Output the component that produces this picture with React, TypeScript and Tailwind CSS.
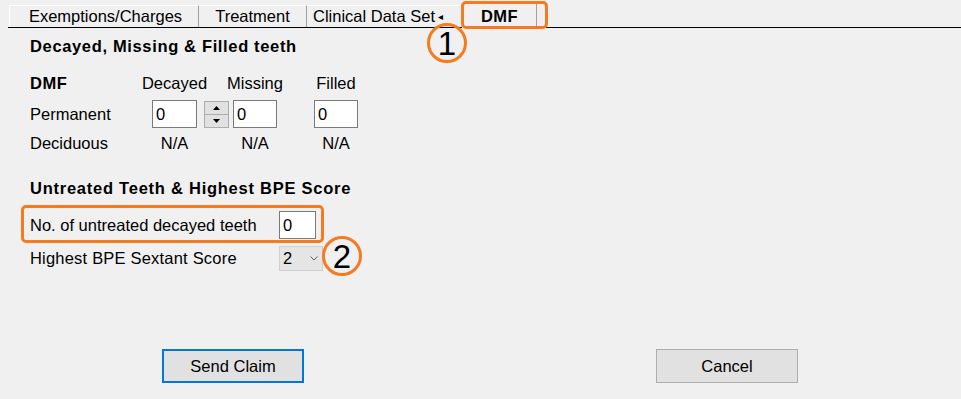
import React from "react";

const Annotation = ({ n, className }: { n: string; className: string }) => (
  <div
    className={`absolute w-[40px] h-[40px] rounded-full border-[3px] border-[#f47b20] flex items-center justify-center text-[33px] leading-none text-black ${className}`}
  >
    {n}
  </div>
);

function NumBox({ value, className = "" }: { value: string; className?: string }) {
  return (
    <div className={`h-[28px] bg-white border border-[#7a7a7a] flex items-center pl-[3px] ${className}`}>
      {value}
    </div>
  );
}

function Spinner() {
  return (
    <div className="w-[25px] h-[27px] flex flex-col border border-[#adadad] bg-[#e1e1e1]">
      <div className="flex-1 flex items-center justify-center border-b border-[#adadad]">
        <svg width="7" height="4" viewBox="0 0 7 4">
          <path d="M3.5 0 L7 4 L0 4 Z" fill="#000" />
        </svg>
      </div>
      <div className="flex-1 flex items-center justify-center">
        <svg width="7" height="4" viewBox="0 0 7 4">
          <path d="M0 0 L7 0 L3.5 4 Z" fill="#000" />
        </svg>
      </div>
    </div>
  );
}

export default function App() {
  return (
    <div className="relative w-[961px] h-[399px] bg-[#f0f0f0] overflow-hidden font-['Liberation_Sans',Arial,sans-serif] text-[16.5px] text-black">
      {/* tab strip */}
      <div className="ml-[8px] h-[28px] flex items-end border-b border-black">
        <div className="ml-px w-[190px] h-[22px] flex items-center justify-center pl-[3px] border-t border-l border-white border-r border-r-[#a0a0a0] bg-[#f0f0f0]">
          Exemptions/Charges
        </div>
        <div className="w-[108px] h-[22px] flex items-center justify-center border-t border-white border-r border-r-[#a0a0a0]">
          Treatment
        </div>
        <div className="w-[154px] h-[22px] flex items-center pl-[6px] border-t border-white whitespace-nowrap">
          Clinical Data Set
          <span className="ml-[3px] text-[10px]">◂</span>
        </div>
        <div className="ml-px w-[75px] h-[25px] flex items-center justify-center font-bold tracking-[0.4px] bg-[#f0f0f0] border-t border-l border-white border-r border-r-[#a0a0a0] mb-[-1px]">
          DMF
        </div>
      </div>

      <div className="pl-[30px]">
        <div className="mt-[8px] leading-[20px] font-bold tracking-[0.65px]">Decayed, Missing &amp; Filled teeth</div>

        {/* DMF grid */}
        <div className="mt-[17px] flex leading-[20px]">
          <div className="w-[122px] font-bold tracking-[0.5px]">DMF</div>
          <div className="w-[45px] flex justify-center whitespace-nowrap">Decayed</div>
          <div className="w-[36px]" />
          <div className="w-[44px] flex justify-center whitespace-nowrap">Missing</div>
          <div className="w-[37px]" />
          <div className="w-[44px] flex justify-center whitespace-nowrap">Filled</div>
        </div>
        <div className="mt-[7px] flex items-center">
          <div className="w-[122px]">Permanent</div>
          <NumBox value="0" className="w-[45px]" />
          <div className="w-[36px] flex pl-[7px]">
            <Spinner />
          </div>
          <NumBox value="0" className="w-[44px]" />
          <div className="w-[37px]" />
          <NumBox value="0" className="w-[44px]" />
        </div>
        <div className="mt-[5px] flex leading-[20px]">
          <div className="w-[122px]">Deciduous</div>
          <div className="w-[45px] flex justify-center">N/A</div>
          <div className="w-[36px]" />
          <div className="w-[44px] flex justify-center">N/A</div>
          <div className="w-[37px]" />
          <div className="w-[44px] flex justify-center">N/A</div>
        </div>

        <div className="mt-[25px] leading-[20px] font-bold tracking-[0.75px]">Untreated Teeth &amp; Highest BPE Score</div>

        <div className="mt-[13px] flex items-center">
          <div className="w-[249px]">No. of untreated decayed teeth</div>
          <NumBox value="0" className="w-[37px] h-[27px]" />
        </div>
        <div className="mt-[7px] flex items-center">
          <div className="w-[249px] tracking-[0.2px]">Highest BPE Sextant Score</div>
          <div className="w-[44px] h-[25px] bg-[#e5e5e5] border border-[#cfcfcf] flex items-center justify-between pl-[3px] pr-[4px]">
            <span>2</span>
            <svg width="8" height="5" viewBox="0 0 8 5">
              <path d="M0.5 0.5 L4 4 L7.5 0.5" fill="none" stroke="#606060" strokeWidth="1" />
            </svg>
          </div>
        </div>
      </div>

      {/* buttons */}
      <div className="mt-[78px] flex pl-[162px]">
        <button className="w-[142px] h-[34px] bg-[#e1e1e1] border-2 border-[#0078d7]">Send Claim</button>
        <button className="ml-[352px] w-[142px] h-[34px] bg-[#e1e1e1] border border-[#adadad]">Cancel</button>
      </div>

      {/* annotations */}
      <div className="absolute left-[461px] top-[1px] w-[87px] h-[28px] rounded-[5px] border-[3px] border-[#f47b20]" />
      <Annotation n="1" className="left-[427px] top-[23px]" />
      <div className="absolute left-[21px] top-[205px] w-[303px] h-[38px] rounded-[5px] border-[3px] border-[#f47b20]" />
      <Annotation n="2" className="left-[322px] top-[236px]" />
    </div>
  );
}
